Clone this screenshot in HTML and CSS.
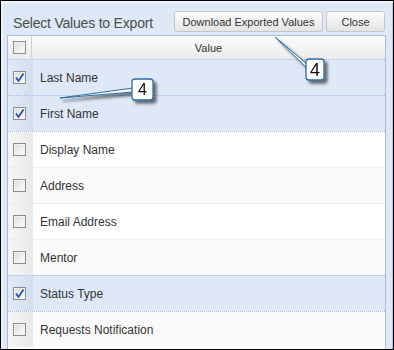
FILE: index.html
```html
<!DOCTYPE html>
<html lang="en">
<head>
    <meta charset="UTF-8">
    <title>Select Values to Export</title>
    <link rel="stylesheet" href="styles.css">
</head>
<body>
    <div class="window">
        <div class="toolbar">
            <span class="title">Select Values to Export</span>
            <div class="buttons">
                <button class="btn btn-download">Download Exported Values</button>
                <button class="btn btn-close">Close</button>
            </div>
        </div>

        <div class="grid">
            <div class="grid-header">
                <div class="checker-cell"><span class="checkbox"></span></div>
                <div class="header-cell">Value</div>
            </div>

            <div class="row selected">
                <div class="checker-cell"><span class="checkbox checked"><svg viewBox="0 0 11 11"><path d="M2 5.5 L4.5 9 L9.5 1.5" /></svg></span></div>
                <div class="cell">Last Name</div>
            </div>
            <div class="row selected">
                <div class="checker-cell"><span class="checkbox checked"><svg viewBox="0 0 11 11"><path d="M2 5.5 L4.5 9 L9.5 1.5" /></svg></span></div>
                <div class="cell">First Name</div>
            </div>
            <div class="row">
                <div class="checker-cell"><span class="checkbox"></span></div>
                <div class="cell">Display Name</div>
            </div>
            <div class="row alt">
                <div class="checker-cell"><span class="checkbox"></span></div>
                <div class="cell">Address</div>
            </div>
            <div class="row">
                <div class="checker-cell"><span class="checkbox"></span></div>
                <div class="cell">Email Address</div>
            </div>
            <div class="row alt">
                <div class="checker-cell"><span class="checkbox"></span></div>
                <div class="cell">Mentor</div>
            </div>
            <div class="row selected">
                <div class="checker-cell"><span class="checkbox checked"><svg viewBox="0 0 11 11"><path d="M2 5.5 L4.5 9 L9.5 1.5" /></svg></span></div>
                <div class="cell">Status Type</div>
            </div>
            <div class="row alt">
                <div class="checker-cell"><span class="checkbox"></span></div>
                <div class="cell">Requests Notification</div>
            </div>
        </div>

        <!-- callouts drawn over the dialog -->
        <svg class="callouts" width="394" height="350" viewBox="0 0 394 350">
            <defs>
                <filter id="shadow" x="-50%" y="-50%" width="200%" height="200%">
                    <feDropShadow dx="3" dy="3" stdDeviation="1.6" flood-color="#000" flood-opacity="0.55" />
                </filter>
            </defs>
            <g filter="url(#shadow)">
                <polygon class="pointer" points="60,98 133,88 133,92" />
                <rect class="bubble" x="132" y="79" width="21" height="21" rx="3" />
                <text class="num" x="142.5" y="94.5" font-size="16">4</text>
            </g>
            <g filter="url(#shadow)">
                <polygon class="pointer" points="275,37 307,64 307,68" />
                <rect class="bubble" x="306" y="59" width="18" height="21" rx="3" />
                <text class="num" x="315" y="76" font-size="18">4</text>
            </g>
        </svg>
    </div>
</body>
</html>
```

FILE: styles.css
```css
body {
    margin: 0;
    font-family: "Liberation Sans", Arial, sans-serif;
}

.window {
    position: relative;
    width: 394px;
    height: 350px;
    box-sizing: border-box;
    border: 1px solid #000;
    background-color: #dfe8f6;
    box-shadow: inset 2px 2px 0 #eef3fa, inset -1px 0 0 #b9c7da;
    padding: 0 7px 0 6px;
    overflow: hidden;
}

.toolbar {
    display: flex;
    justify-content: space-between;
    align-items: flex-start;
    height: 34px;
}

.title {
    margin: 14px 0 0 6px;
    font-size: 14px;
    line-height: 16px;
    letter-spacing: -0.2px;
    color: #4d4d4d;
}

.buttons {
    display: flex;
    gap: 3px;
    margin: 10px 1px 0 0;
}

.btn {
    height: 21px;
    padding: 0;
    font-family: "Liberation Sans", Arial, sans-serif;
    font-size: 11px;
    color: #333;
    border: 1px solid #c6c6c6;
    border-radius: 3px;
    background: linear-gradient(#fdfdfd, #f0f0f0 50%, #e4e4e4);
}

.btn-download {
    width: 149px;
}

.btn-close {
    width: 59px;
}

.grid {
    border: 1px solid #a9bcd6;
    border-bottom: none;
    background-color: #fff;
    height: 400px;
}

.grid-header {
    display: flex;
    height: 23px;
    background: linear-gradient(#fbfbfb, #ececec);
}

.checker-cell {
    width: 24px;
    flex-shrink: 0;
    display: flex;
    align-items: center;
    padding-left: 5px;
    box-sizing: border-box;
}

.grid-header .checker-cell {
    border-right: 1px solid #d3d3d3;
}

.header-cell {
    flex: 1;
    display: flex;
    align-items: center;
    justify-content: center;
    font-size: 11px;
    color: #333;
}

.row {
    display: flex;
    height: 36px;
    box-sizing: border-box;
    border-top: 1px solid #ededed;
}

.row .checker-cell {
    width: 25px;
    background: linear-gradient(to right, #f6f6f6, #e9e9e9);
}

.row.alt {
    background-color: #fafafa;
}

.row.selected {
    background-color: #dfe8f6;
}

.row.selected .checker-cell {
    background: linear-gradient(to right, #e2eaf6, #d2ddef);
}

.row.selected,
.row.selected + .row {
    border-top: 1px dotted #a3bae9;
}

.cell {
    flex: 1;
    display: flex;
    align-items: center;
    padding-left: 7px;
    font-size: 12px;
    color: #333;
}

.checkbox {
    width: 13px;
    height: 13px;
    box-sizing: border-box;
    border: 1px solid #8d8d8d;
    background: linear-gradient(135deg, #dadada, #f4f4f4 70%, #fff);
    box-shadow: inset 0 0 0 1px #f2f2f2;
    display: flex;
}

.checkbox svg {
    width: 11px;
    height: 11px;
}

.checkbox path {
    fill: none;
    stroke: #2b4fb3;
    stroke-width: 1.8;
}

.callouts {
    position: absolute;
    left: -1px;
    top: -1px;
    pointer-events: none;
}

.pointer {
    fill: #fff;
    stroke: #2e6ca4;
    stroke-width: 1;
    stroke-linejoin: round;
}

.bubble {
    fill: #fff;
    stroke: #2e6ca4;
    stroke-width: 1.3;
}

.num {
    font-family: "Liberation Sans", Arial, sans-serif;
    text-anchor: middle;
    fill: #111;
}
```
